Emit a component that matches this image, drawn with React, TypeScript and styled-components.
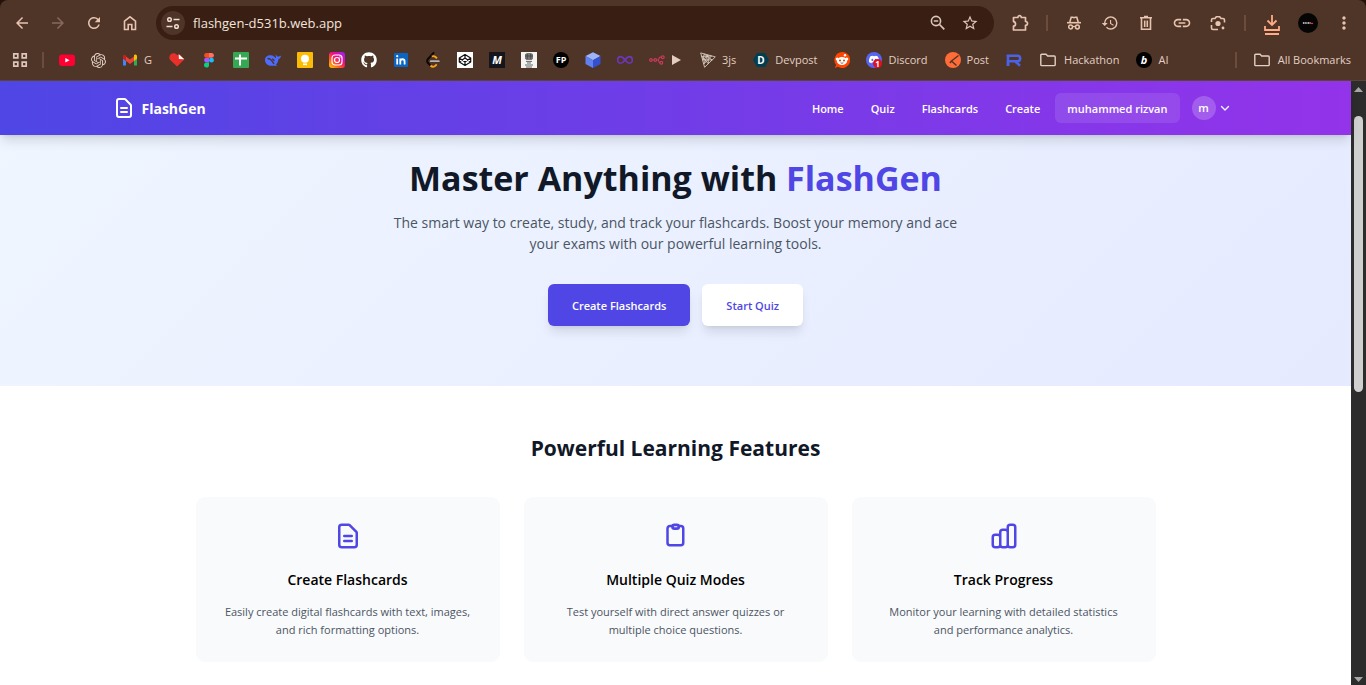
import React from "react";
import styled, { createGlobalStyle, css } from "styled-components";
import {
  MdArrowBack,
  MdArrowForward,
  MdRefresh,
  MdStarBorder,
  MdHistory,
  MdLink,
  MdMoreVert,
} from "react-icons/md";
import { SiOpenai } from "react-icons/si";
import { FaGithub, FaDiscord } from "react-icons/fa";

const GlobalStyle = createGlobalStyle`
  *, *::before, *::after { box-sizing: border-box; }
  body {
    margin: 0;
    background: #fff;
    font-family: "Segoe UI", "Open Sans", "Noto Sans", sans-serif;
    font-size: 11px;
    color: #000;
  }
  h1, h2, h3, p { margin: 0; padding: 0; }
  button { font: inherit; border: 0; cursor: pointer; }
  a { color: inherit; text-decoration: none; }
`;

/* ---------- browser frame ---------- */

const Window = styled.div`
  display: flex;
  flex-direction: column;
  min-height: 100vh;
  background: #24110a;
`;

const BrowserChrome = styled.header`
  background: #4f3527;
  border-radius: 8px 8px 0 0;
  border-bottom: 1px solid #5c4537;
  color: #e8c4b0;
`;

const Toolbar = styled.div`
  display: flex;
  align-items: center;
  height: 46px;
  padding: 0 4px;
`;

const ToolButton = styled.button<{ $dim?: boolean }>`
  display: flex;
  flex: none;
  align-items: center;
  justify-content: center;
  width: 36px;
  height: 28px;
  padding: 0;
  background: none;
  color: ${(p) => (p.$dim ? "#86695a" : "#e8c4b0")};
`;

const ToolDivider = styled.span`
  flex: none;
  width: 2px;
  height: 16px;
  margin: 0 8px;
  background: #6b4c3d;
`;

const AddressBar = styled.div`
  display: flex;
  flex: 1;
  align-items: center;
  height: 34px;
  margin: 0 8px;
  padding: 0 8px 0 5px;
  border-radius: 17px;
  background: #381e13;
`;

const SiteInfo = styled.button`
  display: flex;
  align-items: center;
  justify-content: center;
  width: 24px;
  height: 24px;
  padding: 0;
  border-radius: 50%;
  background: #4f3527;
  color: #f0dcd2;
`;

const AddressInput = styled.input`
  flex: 1;
  min-width: 0;
  padding: 0 8px;
  border: 0;
  outline: 0;
  background: none;
  color: #f3e4dc;
  font: 13px "Segoe UI", "Open Sans", "Noto Sans", sans-serif;
`;

const AddressAction = styled.button`
  display: flex;
  align-items: center;
  justify-content: center;
  width: 32px;
  height: 28px;
  padding: 0;
  background: none;
  color: #dcc5ba;
`;

const Profile = styled.span`
  display: flex;
  align-items: center;
  justify-content: center;
  width: 20px;
  height: 20px;
  border-radius: 50%;
  background: #050505;
`;

const BookmarkBar = styled.nav`
  display: flex;
  align-items: center;
  height: 34px;
  padding: 0 6px 6px 12px;
`;

const Bookmark = styled.a<{ $folder?: boolean; $labelled?: boolean }>`
  display: flex;
  flex: none;
  align-items: center;
  gap: ${(p) => (p.$folder ? 8 : 6)}px;
  padding: 0 ${(p) => (p.$labelled ? 9 : 8)}px 0 ${(p) => (p.$folder ? 10 : 8)}px;
  height: 28px;
  color: #e2cfc5;
  font-size: 11px;
  line-height: 16px;
  white-space: nowrap;
`;

const AppsButton = styled.button`
  display: flex;
  padding: 0;
  background: none;
  color: #dcc5ba;
`;

const BookmarkDivider = styled.span<{ $push?: boolean }>`
  flex: none;
  width: 2px;
  height: 16px;
  margin: 0 7px 0 ${(p) => (p.$push ? "auto" : "14px")};
  background: #6b4c3d;
`;

/* ---------- page ---------- */

const Viewport = styled.div`
  display: flex;
  flex: 1;
`;

const Page = styled.div`
  flex: 1;
  min-width: 0;
  background: #fff;
`;

const ScrollTrack = styled.div`
  display: flex;
  flex: none;
  flex-direction: column;
  align-items: center;
  width: 15px;
  padding: 6px 0 4px;
  background: #2c2c2c;
`;

const ScrollThumb = styled.div`
  width: 9px;
  height: 276px;
  margin: 24px 0 auto;
  border-radius: 5px;
  background: #cfcfcf;
`;

const NavBar = styled.header`
  position: relative;
  z-index: 1;
  background: linear-gradient(to right, #4f46e5, #9333ea);
  box-shadow: 0 8px 11px -2px rgba(0, 0, 0, 0.12), 0 3px 5px -3px rgba(0, 0, 0, 0.12);
`;

const NavInner = styled.div`
  display: flex;
  align-items: center;
  justify-content: space-between;
  max-width: 1152px;
  height: 54px;
  margin: 0 auto;
  padding: 0 21px 0 12px;
  color: #fff;
`;

const Brand = styled.a`
  display: flex;
  align-items: center;
  gap: 6px;
  font-size: 14px;
  font-weight: 700;
  line-height: 21px;
`;

const NavLinks = styled.nav`
  display: flex;
  align-items: center;
  gap: 3px;
  font-weight: 600;
  font-size: 11px;
  line-height: 18px;
`;

const NavLink = styled.a`
  padding: 7px 12px 5px;
  border-radius: 6px;
`;

const UserName = styled(NavLink)`
  background: rgba(255, 255, 255, 0.1);
`;

const AccountButton = styled.button`
  display: flex;
  align-items: center;
  gap: 3px;
  padding: 0 0 0 9px;
  background: none;
  color: #fff;
`;

const Initial = styled.span`
  display: flex;
  align-items: center;
  justify-content: center;
  width: 24px;
  height: 24px;
  border-radius: 50%;
  background: rgba(255, 255, 255, 0.2);
`;

const Hero = styled.section`
  display: flex;
  flex-direction: column;
  align-items: center;
  margin-top: -35px;
  padding: 60px 24px;
  background: linear-gradient(135deg, #eff6ff, #e5eaff);
  text-align: center;
`;

const HeroTitle = styled.h1`
  margin-bottom: 16px;
  color: #111827;
  font-size: 34px;
  font-weight: 700;
  line-height: 36px;
`;

const Accent = styled.span`
  color: #4f46e5;
`;

const HeroText = styled.p`
  max-width: 576px;
  margin-bottom: 30px;
  color: #4b5563;
  font-size: 14px;
  line-height: 21px;
`;

const Actions = styled.div`
  display: flex;
  gap: 12px;
`;

const ActionButton = styled.button<{ $primary?: boolean }>`
  height: 42px;
  padding: 1px 24px 0;
  border-radius: 6px;
  font-size: 11px;
  font-weight: 600;
  line-height: 18px;
  box-shadow: 0 8px 11px -2px rgba(0, 0, 0, 0.1), 0 3px 5px -3px rgba(0, 0, 0, 0.1);
  ${(p) =>
    p.$primary
      ? css`
          background: #4f46e5;
          color: #fff;
        `
      : css`
          background: #fff;
          color: #4f46e5;
        `}
`;

const Features = styled.section`
  max-width: 960px;
  margin: 0 auto;
  padding: 49px 0 24px;
`;

const SectionTitle = styled.h2`
  margin-bottom: 35px;
  color: #111827;
  font-size: 21px;
  font-weight: 700;
  line-height: 27px;
  text-align: center;
`;

const CardGrid = styled.div`
  display: grid;
  grid-template-columns: repeat(3, 1fr);
  gap: 24px;
`;

const Card = styled.article`
  display: flex;
  flex-direction: column;
  align-items: center;
  padding: 24px 28px 23px;
  border-radius: 9px;
  background: #f9fafb;
  color: #4f46e5;
  text-align: center;
`;

const CardTitle = styled.h3`
  margin: 18px 0 13px;
  color: #000;
  font-size: 14px;
  font-weight: 600;
  line-height: 21px;
`;

const CardText = styled.p`
  color: #4b5563;
  font-size: 11px;
  line-height: 18px;
`;

/* ---------- drawings ---------- */

type SvgProps = { size?: number; box?: string; children: React.ReactNode };

const Icon = ({ size = 16, box = "0 0 16 16", children }: SvgProps) => (
  <svg width={size} height={size} viewBox={box} fill="none" aria-hidden="true">
    {children}
  </svg>
);

const DocumentIcon = ({ size }: { size: number }) => (
  <Icon size={size} box="0 0 24 24">
    <path
      d="M9 12h6m-6 4h6m2 5H7a2 2 0 01-2-2V5a2 2 0 012-2h5.586a1 1 0 01.707.293l5.414 5.414a1 1 0 01.293.707V19a2 2 0 01-2 2z"
      stroke="currentColor"
      strokeWidth="2"
      strokeLinecap="round"
      strokeLinejoin="round"
    />
  </Icon>
);

const ClipboardIcon = () => (
  <Icon size={30} box="0 0 24 24">
    <path
      d="M9 4H7.200a2 2 0 00-2 2v11.300a2 2 0 002 2h8.600a2 2 0 002-2V6a2 2 0 00-2-2H15"
      stroke="currentColor"
      strokeWidth="2"
      strokeLinecap="round"
      strokeLinejoin="round"
    />
    <rect x="9.200" y="3" width="5" height="3" rx="1.500" stroke="currentColor" strokeWidth="2.200" />
  </Icon>
);

const BarsIcon = () => (
  <Icon size={30} box="0 0 24 24">
    <path
      d="M9 19v-6a2 2 0 00-2-2H5a2 2 0 00-2 2v6a2 2 0 002 2h2a2 2 0 002-2zm0 0V9a2 2 0 012-2h2a2 2 0 012 2v10m-6 0a2 2 0 002 2h2a2 2 0 002-2m0 0V5a2 2 0 012-2h2a2 2 0 012 2v14a2 2 0 01-2 2h-2a2 2 0 01-2-2z"
      stroke="currentColor"
      strokeWidth="2"
      strokeLinecap="round"
      strokeLinejoin="round"
    />
  </Icon>
);

const FolderIcon = () => (
  <Icon>
    <path d="M.8 3.200q0-.9.900-.9h4.300l1.700 1.700h6.600q.9 0 .9.900v7.800q0 .9-.9.900H1.700q-.9 0-.9-.9z" stroke="currentColor" strokeWidth="1.400" />
  </Icon>
);

const Badge = ({ fill, round, text, size = 8, italic }: { fill: string; round?: boolean; text: string; size?: number; italic?: boolean }) => (
  <Icon>
    <rect width="16" height="16" rx={round ? 8 : 0} fill={fill} />
    <text x="8" y={size > 9 ? 12 : 11} textAnchor="middle" fontSize={size} fontWeight="700" fill="#fff" fontStyle={italic ? "italic" : "normal"}>
      {text}
    </text>
  </Icon>
);

const AppsIcon = () => (
  <Icon>
    <path d="M1.800 1.800h4v4h-4zM10.200 1.800h4v4h-4zM1.800 10.200h4v4h-4zM10.200 10.200h4v4h-4z" stroke="currentColor" strokeWidth="1.700" />
  </Icon>
);

const TuneIcon = () => (
  <Icon>
    <circle cx="4.500" cy="4.500" r="1.800" stroke="currentColor" strokeWidth="1.500" />
    <path d="M8.500 4.500h6M1.500 11.500h6" stroke="currentColor" strokeWidth="1.500" />
    <circle cx="11.500" cy="11.500" r="1.800" stroke="currentColor" strokeWidth="1.500" />
  </Icon>
);

const ZoomOutIcon = () => (
  <Icon>
    <circle cx="6" cy="6" r="4.600" stroke="currentColor" strokeWidth="1.600" />
    <path d="M3.800 6h4.400M9.500 9.500l4.800 4.800" stroke="currentColor" strokeWidth="1.700" />
  </Icon>
);

const PuzzleIcon = () => (
  <Icon size={18} box="0 0 18 18">
    <path
      d="M2.500 3.500h4.400c0-2.500 3.400-2.500 3.400 0h4.200v4c2.700.2 2.700 3.600 0 3.800V16h-12v-3.800c2.700-.4 2.700-4.200 0-4.600z"
      stroke="currentColor"
      strokeWidth="1.700"
      strokeLinejoin="round"
    />
  </Icon>
);

const IncognitoIcon = () => (
  <Icon>
    <path d="M1 7.700h14" stroke="currentColor" strokeWidth="1.600" />
    <path d="M3.800 7L5.200 2.200h1.500l1.300.5 1.300-.5h1.500L12.200 7" stroke="currentColor" strokeWidth="1.600" />
    <circle cx="4.600" cy="12" r="1.900" stroke="currentColor" strokeWidth="1.500" />
    <circle cx="11.400" cy="12" r="1.900" stroke="currentColor" strokeWidth="1.500" />
    <path d="M6.500 11.700q1.500-.8 3 0" stroke="currentColor" strokeWidth="1.300" />
  </Icon>
);

const TrashIcon = () => (
  <Icon>
    <path d="M2 2.800h12M6 1.500h4M3.500 3v11.300h9V3M6.700 5.500v6.500M9.300 5.500v6.500" stroke="currentColor" strokeWidth="1.600" />
  </Icon>
);

const LensIcon = () => (
  <Icon>
    <path
      d="M1.500 7V5q0-1.500 1.500-1.500h2L6.300 1.800h3.400L11 3.500h2q1.500 0 1.500 1.500v2.500M1.500 10v3q0 1.500 1.500 1.500h5"
      stroke="currentColor"
      strokeWidth="1.600"
    />
    <circle cx="8" cy="8.500" r="2.600" fill="currentColor" />
    <circle cx="13" cy="13" r="1.400" fill="currentColor" />
  </Icon>
);

const DownloadIcon = () => (
  <svg width="18" height="24" viewBox="0 0 18 24" fill="none" aria-hidden="true">
    <path d="M9 4v10M4.500 9.500L9 14l4.500-4.500M2 15v4h14v-4M2 23h14" stroke="#ffab86" strokeWidth="1.800" />
  </svg>
);

const YouTubeIcon = () => (
  <Icon>
    <rect y="2.500" width="16" height="11.500" rx="3" fill="#ff0033" />
    <path d="M6.300 5.900v4.700l4.200-2.300z" fill="#fff" />
  </Icon>
);

const GmailIcon = () => (
  <Icon>
    <path d="M1 4v9.500h3V8.200" fill="#4285f4" />
    <path d="M12 8.200v5.300h3V4" fill="#34a853" />
    <path d="M12 5v4l3-2.300V4.300C15 2.500 13 2 12 3z" fill="#fbbc04" />
    <path d="M4 9V4.500l4 3 4-3V9l-4 3z" fill="#ea4335" />
    <path d="M1 4.300v2.400L4 9V3.500C2.500 2 1 3 1 4.300z" fill="#c5221f" />
  </Icon>
);

const HeartIcon = () => (
  <Icon>
    <path d="M8 14.500L1 7.800C-.8 4.500 1.500 1.300 4.500 1.300c1.500 0 2.700.6 3.500 1.800L11 2.500l4.300 5z" fill="#e8302a" />
    <path d="M9.700 2.200l5.600 5.100-5.400-.2z" fill="#fff" />
  </Icon>
);

const FigmaIcon = () => (
  <Icon>
    <path d="M8 1H5.500a2.400 2.400 0 000 4.800H8z" fill="#f24e1e" />
    <path d="M8 1h2.500a2.400 2.400 0 010 4.800H8z" fill="#ff7262" />
    <path d="M8 5.800H5.500a2.400 2.400 0 000 4.800H8z" fill="#a259ff" />
    <circle cx="10.500" cy="8.200" r="2.400" fill="#1abcfe" />
    <path d="M8 10.600H5.500A2.500 2.500 0 108 13z" fill="#0acf83" />
  </Icon>
);

const SheetsIcon = () => (
  <Icon>
    <rect width="16" height="16" rx="1" fill="#34a853" />
    <path d="M2 6.500h12M7 2.500v11" stroke="#fff" strokeWidth="2" />
  </Icon>
);

const WhaleIcon = () => (
  <Icon>
    <path
      d="M0 8c0-3 2.500-5 6-4.800C8 3.300 9.500 5 11 6.200c0-1.500-.2-2.400-.6-3.600 1 .7 1.500 1.500 2 2 1.200.2 2.400-.6 3.600-1.200-.2 2-1.200 3.400-2.600 3.800-.2 2.300-1 3.900-2.500 5.200l1.400 1.100c-1.800.6-3.600.1-4.800.3C3 14.100 0 11.500 0 8z"
      fill="#4d6bfe"
    />
    <path d="M2.500 6.500c3 0 5 2.500 6.500 5.500M7 7.200c1.200-.1 2 .6 2.200 1.800" stroke="#4f3527" strokeWidth="1.300" />
  </Icon>
);

const KeepIcon = () => (
  <Icon>
    <rect width="16" height="16" rx="1" fill="#fbbc04" />
    <circle cx="8" cy="6.800" r="4" fill="#fff" />
    <path d="M6 12.300h4" stroke="#fff" strokeWidth="1.600" />
  </Icon>
);

const InstagramIcon = () => (
  <Icon>
    <defs>
      <linearGradient id="insta" x1="0" y1="16" x2="14" y2="0" gradientUnits="userSpaceOnUse">
        <stop offset="0" stopColor="#ffd000" />
        <stop offset=".35" stopColor="#ff5a1f" />
        <stop offset=".65" stopColor="#ee0a8c" />
        <stop offset="1" stopColor="#a020f0" />
      </linearGradient>
    </defs>
    <rect width="16" height="16" rx="3" fill="url(#insta)" />
    <rect x="3" y="3" width="10" height="10" rx="3" stroke="#fff" strokeWidth="1.200" />
    <circle cx="8" cy="8" r="2.500" stroke="#fff" strokeWidth="1.200" />
    <circle cx="11" cy="5" r=".7" fill="#fff" />
  </Icon>
);

const LinkedInIcon = () => (
  <Icon>
    <rect x="1" y="1" width="14" height="14" rx="1" fill="#0a66c2" />
    <path d="M4.200 6.500v6M7.300 6.500v6M7.300 9.500c0-3 4.300-3 4.300 0v3" stroke="#fff" strokeWidth="1.800" />
    <circle cx="4.200" cy="4.200" r="1.100" fill="#fff" />
  </Icon>
);

const LeetCodeIcon = () => (
  <Icon>
    <path d="M8.500 1L3 7" stroke="#080808" strokeWidth="1.900" strokeLinecap="round" />
    <path d="M3 7C1.500 8.500 2 10 3 11l2.800 2.800" stroke="#080808" strokeWidth="1.900" />
    <path d="M5.500 13.500c1.600 1.700 3.500 1.700 5 .1l1.200-1.200M6.800 4.500c1.500-.8 2.700-.4 4 .8l1.200 1.100" stroke="#ffa116" strokeWidth="1.900" />
    <path d="M5.800 9.200h8" stroke="#b3b3b3" strokeWidth="1.800" strokeLinecap="round" />
  </Icon>
);

const CodePenIcon = () => (
  <Icon>
    <rect width="16" height="16" fill="#fff" />
    <path d="M8 2.500l5.700 3.500v4L8 13.500 2.300 10V6zM2.300 6L8 10l5.700-4M2.300 10L8 6l5.700 4M8 2.500V6M8 10v3.500" stroke="#111" strokeWidth="1.200" strokeLinejoin="round" />
  </Icon>
);

const EmblemIcon = () => (
  <Icon>
    <rect width="16" height="16" fill="#f4f4f2" />
    <path d="M4 2.200l2-1.200h4l2 1.200v4L10.800 8H5.200L4 6.200z" fill="#777" />
    <path d="M6.300 2v5M9.700 2v5M4 4h8" stroke="#444" strokeWidth=".8" />
    <path d="M5 9.400h6M6 11h4M4 13h8M5 15h6" stroke="#666" strokeWidth="1" />
  </Icon>
);

const CubeIcon = () => (
  <Icon>
    <path d="M8 .2l7.500 3.900L8 8.200.5 4.100z" fill="#9db4fb" />
    <path d="M.5 4.100L8 8.200V16L.5 12z" fill="#6180f0" />
    <path d="M15.500 4.100L8 8.200V16l7.500-4z" fill="#3450d0" />
  </Icon>
);

const InfinityIcon = () => (
  <Icon>
    <path d="M8 8C5.800 5 4.600 4.600 3.600 4.600a3 3.300 0 000 6.600C5 11.200 6.200 10.500 8 8s3-3.400 4.400-3.400a3 3.300 0 010 6.600C11.400 11.200 10.200 10.800 8 8z" stroke="#6d36bd" strokeWidth="1.600" />
  </Icon>
);

const NodesIcon = () => (
  <Icon>
    <g stroke="#c9395c" strokeWidth="1.200">
      <circle cx="1.900" cy="8" r="1.300" />
      <circle cx="6.300" cy="8" r="1.300" />
      <circle cx="13.800" cy="5.200" r="1.400" />
      <circle cx="12.300" cy="10.800" r="1.400" />
      <path d="M3.200 8H5M7.600 8h1.200c1.600 0 .4-2.800 2.600-2.800h1M8.800 8c1.200 0 .8 2.800 2 2.800" />
    </g>
  </Icon>
);

const PlayIcon = () => (
  <Icon size={12} box="0 0 12 12">
    <path d="M1 1l9 5-9 5z" fill="#e3cdc0" />
  </Icon>
);

const ThreeIcon = () => (
  <Icon>
    <path d="M.7.900l14.600 4L4.600 15.300zM4.300 2l7.800 6M7.900 3L8.400 11.800M1.700 4.400L8.400 11.800M2.700 8l9.600-.1M4.300 2L2.700 8l5.200-5M11.500 4l-7.700 8M1.700 4.400l9.800-.4M3.700 11.800L7.900 3" stroke="#d8cac0" strokeWidth=".9" />
  </Icon>
);

const DevpostIcon = () => (
  <Icon>
    <path d="M4 1h8l4 7-4 7H4L0 8z" fill="#003e54" />
    <text x="8" y="11.500" textAnchor="middle" fontSize="10" fontWeight="700" fill="#fff">
      D
    </text>
  </Icon>
);

const RedditIcon = () => (
  <Icon>
    <path d="M8 0a8 8 0 11-4 14.800L.7 16l1.500-3A8 8 0 018 0z" fill="#ff4500" />
    <circle cx="3.200" cy="7" r="1.500" fill="#fff" />
    <circle cx="12.800" cy="7" r="1.500" fill="#fff" />
    <ellipse cx="8" cy="9" rx="5.200" ry="4" fill="#fff" />
    <circle cx="11" cy="3.200" r="1.200" fill="#fff" />
    <circle cx="6" cy="8.500" r="1" fill="#e03c00" />
    <circle cx="10" cy="8.500" r="1" fill="#e03c00" />
    <path d="M6 10.800h4q-2 1.600-4 0z" fill="#222" />
  </Icon>
);

const DiscordIcon = () => (
  <Icon>
    <circle cx="8" cy="8" r="8" fill="#5865f2" />
    <FaDiscord x="2.500" y="2" width="11" height="11" size={11} color="#fff" />
    <circle cx="11.500" cy="11.500" r="4.500" fill="#e01020" />
    <text x="11.500" y="14.500" textAnchor="middle" fontSize="8" fontWeight="700" fill="#fff">
      1
    </text>
  </Icon>
);

const PostmanIcon = () => (
  <Icon>
    <circle cx="8" cy="8" r="8" fill="#ff6c37" />
    <path d="M13.500 3.500L6.500 9l5 4.500M6.500 9l-1.600 2" stroke="#4f3527" strokeWidth="1.400" />
  </Icon>
);

const RIcon = () => (
  <Icon>
    <path d="M2 14V9.200h9.500a2.600 2.600 0 000-5.400H.7M9.500 9.700l4.500 4" stroke="#4a62e8" strokeWidth="2.500" />
    <path d="M2 3v11" stroke="#4a62e8" strokeWidth="2.500" />
  </Icon>
);

/* ---------- data ---------- */

type BookmarkItem = { name: string; icon: React.ReactNode; label?: React.ReactNode; folder?: boolean };

const bookmarks: BookmarkItem[] = [
  { name: "YouTube", icon: <YouTubeIcon /> },
  { name: "ChatGPT", icon: <SiOpenai size={15} /> },
  { name: "Gmail", icon: <GmailIcon />, label: "G" },
  { name: "Heart", icon: <HeartIcon /> },
  { name: "Figma", icon: <FigmaIcon /> },
  { name: "Sheets", icon: <SheetsIcon /> },
  { name: "DeepSeek", icon: <WhaleIcon /> },
  { name: "Keep", icon: <KeepIcon /> },
  { name: "Instagram", icon: <InstagramIcon /> },
  { name: "GitHub", icon: <FaGithub size={16} color="#fff" /> },
  { name: "LinkedIn", icon: <LinkedInIcon /> },
  { name: "LeetCode", icon: <LeetCodeIcon /> },
  { name: "CodePen", icon: <CodePenIcon /> },
  { name: "Monkeytype", icon: <Badge fill="#15151d" text="M" size={11} italic /> },
  { name: "Emblem", icon: <EmblemIcon /> },
  { name: "FP", icon: <Badge fill="#000" round text="FP" size={9} /> },
  { name: "Cube", icon: <CubeIcon /> },
  { name: "Infinity", icon: <InfinityIcon /> },
  { name: "Workflow", icon: <NodesIcon />, label: <PlayIcon /> },
  { name: "Three", icon: <ThreeIcon />, label: "3js" },
  { name: "Devpost", icon: <DevpostIcon />, label: "Devpost" },
  { name: "Reddit", icon: <RedditIcon /> },
  { name: "Discord", icon: <DiscordIcon />, label: "Discord" },
  { name: "Postman", icon: <PostmanIcon />, label: "Post" },
  { name: "R", icon: <RIcon /> },
  { name: "Hackathon", icon: <FolderIcon />, label: "Hackathon", folder: true },
  { name: "AI", icon: <Badge fill="#000" round text="b" size={11} italic />, label: "AI" },
];

const features = [
  {
    icon: <DocumentIcon size={30} />,
    title: "Create Flashcards",
    text: "Easily create digital flashcards with text, images, and rich formatting options.",
  },
  {
    icon: <ClipboardIcon />,
    title: "Multiple Quiz Modes",
    text: "Test yourself with direct answer quizzes or multiple choice questions.",
  },
  {
    icon: <BarsIcon />,
    title: "Track Progress",
    text: "Monitor your learning with detailed statistics and performance analytics.",
  },
];

export default function App() {
  return (
    <>
      <GlobalStyle />
      <Window>
        <BrowserChrome>
          <Toolbar>
            <ToolButton aria-label="Back"><MdArrowBack size={18} /></ToolButton>
            <ToolButton aria-label="Forward" $dim><MdArrowForward size={18} /></ToolButton>
            <ToolButton aria-label="Reload"><MdRefresh size={18} /></ToolButton>
            <ToolButton aria-label="Home">
              <Icon>
                <path d="M2.500 6.200L8 1.800l5.500 4.400v8.300H9.800V9.500H6.200v5H2.500z" stroke="currentColor" strokeWidth="1.600" />
              </Icon>
            </ToolButton>
            <AddressBar>
              <SiteInfo aria-label="Site information"><TuneIcon /></SiteInfo>
              <AddressInput aria-label="Address" defaultValue="flashgen-d531b.web.app" />
              <AddressAction aria-label="Zoom"><ZoomOutIcon /></AddressAction>
              <AddressAction aria-label="Bookmark this page"><MdStarBorder size={18} /></AddressAction>
            </AddressBar>
            <ToolButton aria-label="Extensions"><PuzzleIcon /></ToolButton>
            <ToolDivider />
            <ToolButton aria-label="Incognito"><IncognitoIcon /></ToolButton>
            <ToolButton aria-label="History"><MdHistory size={18} /></ToolButton>
            <ToolButton aria-label="Delete browsing data"><TrashIcon /></ToolButton>
            <ToolButton aria-label="Copy link"><MdLink size={20} /></ToolButton>
            <ToolButton aria-label="Lens"><LensIcon /></ToolButton>
            <ToolDivider />
            <ToolButton aria-label="Downloads"><DownloadIcon /></ToolButton>
            <ToolButton aria-label="Profile">
              <Profile>
                <svg width="12" height="4" viewBox="0 0 14 4" aria-hidden="true">
                  <path d="M1 2h9" stroke="#ddd" strokeWidth="2" strokeDasharray="1.500 .5" />
                  <path d="M10 2.500h3" stroke="#d33" strokeWidth="1.500" />
                </svg>
              </Profile>
            </ToolButton>
            <ToolButton aria-label="Menu"><MdMoreVert size={20} /></ToolButton>
          </Toolbar>
          <BookmarkBar aria-label="Bookmarks">
            <AppsButton aria-label="Apps"><AppsIcon /></AppsButton>
            <BookmarkDivider />
            {bookmarks.map((b) => (
              <Bookmark key={b.name} href="#" aria-label={b.name} $folder={b.folder} $labelled={b.label !== undefined}>
                {b.icon}
                {b.label}
              </Bookmark>
            ))}
            <BookmarkDivider $push />
            <Bookmark href="#" $folder $labelled>
              <FolderIcon />
              All Bookmarks
            </Bookmark>
          </BookmarkBar>
        </BrowserChrome>

        <Viewport>
          <Page>
            <NavBar>
              <NavInner>
                <Brand href="#">
                  <DocumentIcon size={24} />
                  FlashGen
                </Brand>
                <NavLinks>
                  <NavLink href="#">Home</NavLink>
                  <NavLink href="#">Quiz</NavLink>
                  <NavLink href="#">Flashcards</NavLink>
                  <NavLink href="#">Create</NavLink>
                  <UserName href="#">muhammed rizvan</UserName>
                  <AccountButton aria-label="Account">
                    <Initial>m</Initial>
                    <Icon size={12} box="0 0 24 24">
                      <path d="M19 9l-7 7-7-7" stroke="currentColor" strokeWidth="2.500" strokeLinecap="round" strokeLinejoin="round" />
                    </Icon>
                  </AccountButton>
                </NavLinks>
              </NavInner>
            </NavBar>
            <main>
              <Hero>
                <HeroTitle>
                  Master Anything with <Accent>FlashGen</Accent>
                </HeroTitle>
                <HeroText>
                  The smart way to create, study, and track your flashcards. Boost your memory and ace your exams with our
                  powerful learning tools.
                </HeroText>
                <Actions>
                  <ActionButton $primary>Create Flashcards</ActionButton>
                  <ActionButton>Start Quiz</ActionButton>
                </Actions>
              </Hero>
              <Features>
                <SectionTitle>Powerful Learning Features</SectionTitle>
                <CardGrid>
                  {features.map((f) => (
                    <Card key={f.title}>
                      {f.icon}
                      <CardTitle>{f.title}</CardTitle>
                      <CardText>{f.text}</CardText>
                    </Card>
                  ))}
                </CardGrid>
              </Features>
            </main>
          </Page>
          <ScrollTrack>
            <svg width="9" height="5" viewBox="0 0 9 5" aria-hidden="true">
              <path d="M4.500 0L9 5H0z" fill="#a6a6a6" />
            </svg>
            <ScrollThumb />
            <svg width="9" height="5" viewBox="0 0 9 5" aria-hidden="true">
              <path d="M4.500 5L9 0H0z" fill="#a6a6a6" />
            </svg>
          </ScrollTrack>
        </Viewport>
      </Window>
    </>
  );
}
